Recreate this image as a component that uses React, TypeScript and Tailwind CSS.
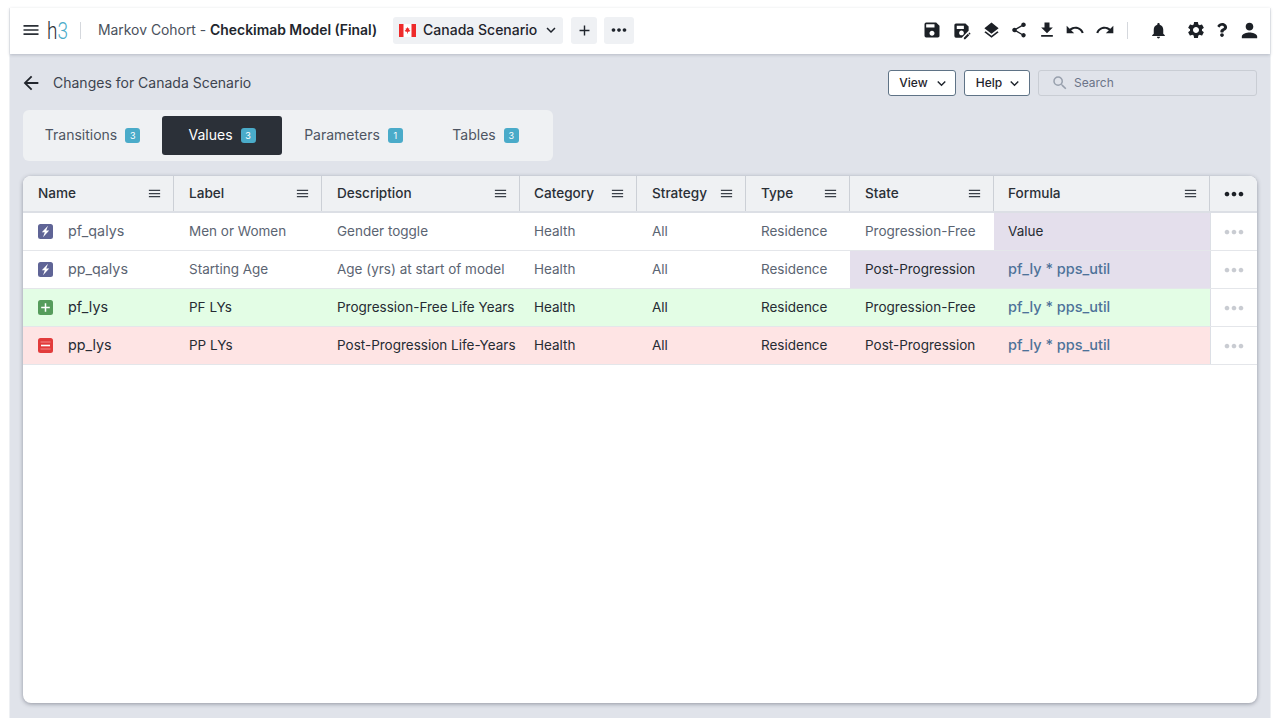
import { MdSave, MdSaveAs, MdLayers, MdShare, MdFileDownload, MdUndo, MdRedo, MdNotifications, MdSettings, MdPerson, MdMenu, MdKeyboardArrowDown, MdAdd, MdMoreHoriz, MdArrowBack, MdSearch } from "react-icons/md";
import { FaQuestion } from "react-icons/fa";

const cols = ["Name", "Label", "Description", "Category", "Strategy", "Type", "State", "Formula"];
const gridCols = "grid grid-cols-[151px_148px_198px_117px_109px_104px_144px_216px_47px]";

type Row = {
  kind: "edit" | "add" | "del";
  cells: string[];
  bg: string;
  text: string;
  stateBg?: string;
  formulaBg?: string;
  formulaLink: boolean;
};

const rows: Row[] = [
  { kind: "edit", cells: ["pf_qalys", "Men or Women", "Gender toggle", "Health", "All", "Residence", "Progression-Free", "Value"], bg: "bg-white", text: "text-[#5b6472]", formulaBg: "bg-[#e4dfec]", formulaLink: false },
  { kind: "edit", cells: ["pp_qalys", "Starting Age", "Age (yrs) at start of model", "Health", "All", "Residence", "Post-Progression", "pf_ly * pps_util"], bg: "bg-white", text: "text-[#5b6472]", stateBg: "bg-[#e4dfec]", formulaBg: "bg-[#e4dfec]", formulaLink: true },
  { kind: "add", cells: ["pf_lys", "PF LYs", "Progression-Free Life Years", "Health", "All", "Residence", "Progression-Free", "pf_ly * pps_util"], bg: "bg-[#e3fde5]", text: "text-[#262b33]", formulaLink: true },
  { kind: "del", cells: ["pp_lys", "PP LYs", "Post-Progression Life-Years", "Health", "All", "Residence", "Post-Progression", "pf_ly * pps_util"], bg: "bg-[#fee4e4]", text: "text-[#262b33]", formulaLink: true },
];

function RowIcon({ kind }: { kind: Row["kind"] }) {
  if (kind === "edit")
    return (
      <svg width="15" height="15" viewBox="0 0 15 15" className="shrink-0">
        <rect width="15" height="15" rx="2.5" fill="#5f6496" />
        <path d="M10 1.8 3.8 8.3h3L5 13.2l6.2-6.6h-3z" fill="#fff" />
      </svg>
    );
  if (kind === "add")
    return (
      <svg width="15" height="15" viewBox="0 0 15 15" className="shrink-0">
        <rect width="15" height="15" rx="2.5" fill="#569c5c" />
        <path d="M7.5 3.2v8.6M3.2 7.5h8.6" stroke="#fff" strokeWidth="1.5" />
      </svg>
    );
  return (
    <svg width="15" height="15" viewBox="0 0 15 15" className="shrink-0">
      <rect width="15" height="15" rx="2.5" fill="#e23b3b" />
      <path d="M2.5 4h10M2.5 11h10" stroke="#f58a8a" strokeWidth="1" />
      <path d="M3 7.5h9" stroke="#fff" strokeWidth="1.6" />
    </svg>
  );
}

function Flag() {
  return (
    <svg width="17" height="13" viewBox="0 0 17 13" className="shrink-0">
      <rect width="17" height="13" fill="#fff" />
      <rect width="4.5" height="13" fill="#ee2a2a" />
      <rect x="12.5" width="4.5" height="13" fill="#ee2a2a" />
      <path d="M8.5 3 9.3 4.6 10.3 4.2 10 6.4 11 5.8 11.2 6.8 10.2 7.8 8.9 7.7V9.5H8.1V7.7L6.8 7.8 5.8 6.8 6 5.8 7 6.4 6.7 4.2 7.7 4.6z" fill="#ee2a2a" />
    </svg>
  );
}

function Tab({ label, n, active, w }: { label: string; n: string; active?: boolean; w: string }) {
  return (
    <div className={`flex h-[39px] items-center justify-center gap-[8px] rounded-[3px] ${w} ${active ? "bg-[#2b3038] text-white" : "text-[#4d5562]"}`}>
      <span className="pb-[2px] text-[14px]">{label}</span>
      <span className="flex h-[15px] w-[15px] items-center justify-center rounded-[3px] bg-[#4aabc9] text-[9px] text-white">{n}</span>
    </div>
  );
}

export default function App() {
  return (
    <div className="flex h-[718px] w-[1280px] overflow-hidden bg-white px-[9px] pt-2 font-['Inter','Noto_Sans',sans-serif] text-[#1f242c]">
      <div className="flex min-w-0 flex-1 flex-col border-l border-r border-[#eef0f3] bg-[#e0e3ea]">
        <header className="relative z-10 flex h-[46px] shrink-0 items-center bg-white pb-[2px] pl-[11px] pr-[9px] shadow-[0_1px_3px_rgba(60,70,90,0.25)]">
          <MdMenu className="text-[20px] text-[#2a2f36]" />
          <div className="ml-[6px] flex w-[22px] scale-y-[1.3] items-baseline font-['Roboto',sans-serif] text-[19px] leading-none font-light">
            <span className="text-[#2a2f36]">h</span>
            <span className="text-[#4aabc9]">3</span>
          </div>
          <div className="ml-[11px] h-[17px] w-px bg-[#d5d8dd]" />
          <div className="ml-[17px] text-[13.9px] whitespace-nowrap">
            <span className="text-[#4a515c]">Markov Cohort - </span>
            <span className="font-semibold text-[#22262d]">Checkimab Model (Final)</span>
          </div>
          <div className="ml-[16px] flex h-[27px] w-[170px] items-center rounded-[3px] bg-[#eff1f4] pl-[6px]">
            <Flag />
            <span className="ml-[7px] pb-[2px] text-[14px] font-medium whitespace-nowrap">Canada Scenario</span>
            <MdKeyboardArrowDown className="ml-auto mr-[3px] text-[18px]" />
          </div>
          <div className="ml-[8px] flex h-[27px] w-[26px] items-center justify-center rounded-[3px] bg-[#eff1f4]">
            <MdAdd className="text-[17px]" />
          </div>
          <div className="ml-[7px] flex h-[27px] w-[30px] items-center justify-center rounded-[3px] bg-[#eff1f4]">
            <MdMoreHoriz className="text-[22px]" />
          </div>
          <div className="ml-auto flex items-center text-[#1c2026]">
            <MdSave className="text-[20px]" />
            <MdSaveAs className="ml-[10px] text-[19px]" />
            <MdLayers className="ml-[11px] text-[19px]" />
            <MdShare className="ml-[9px] text-[18px]" />
            <MdFileDownload className="ml-[9px] text-[20px]" />
            <MdUndo className="ml-[8px] text-[20px]" />
            <MdRedo className="ml-[10px] text-[20px]" />
            <div className="ml-[12px] h-[17px] w-px bg-[#d5d8dd]" />
            <MdNotifications className="ml-[21px] text-[19px]" />
            <MdSettings className="ml-[18px] text-[20px]" />
            <FaQuestion className="ml-[9px] text-[14px]" />
            <MdPerson className="ml-[9px] text-[23px]" />
          </div>
        </header>

        <main className="flex min-h-0 flex-1 flex-col pl-[13px] pr-[13px]">
          <div className="mt-[16px] flex h-[26px] items-center">
            <MdArrowBack className="-ml-[3px] text-[22px] text-[#22262d]" />
            <span className="ml-[11px] pb-[2px] text-[14px] text-[#3d444f]">Changes for Canada Scenario</span>
            <button className="ml-auto flex h-[26px] w-[68px] items-center justify-center gap-[5px] rounded-[3px] border border-[#5f7386] bg-white pl-[5px] text-[12px] font-medium">
              View <MdKeyboardArrowDown className="text-[17px]" />
            </button>
            <button className="ml-[8px] flex h-[26px] w-[66px] items-center justify-center gap-[4px] rounded-[3px] border border-[#5f7386] bg-white pl-[5px] text-[12px] font-medium">
              Help <MdKeyboardArrowDown className="text-[17px]" />
            </button>
            <div className="ml-[8px] flex h-[26px] w-[219px] items-center rounded-[3px] border border-[#c9cdd4] bg-[#e0e3ea] pl-[12px] text-[12px] text-[#6b7488]">
              <MdSearch className="text-[18px] text-[#98a0ad]" />
              <span className="ml-[5px]">Search</span>
            </div>
          </div>

          <div className="mt-[14px] flex h-[51px] w-[530px] items-center rounded-[6px] bg-[#eff1f3] pl-[5px]">
            <Tab label="Transitions" n="3" w="w-[134px] pr-[5px]" />
            <Tab label="Values" n="3" active w="w-[120px]" />
            <Tab label="Parameters" n="1" w="w-[143px]" />
            <Tab label="Tables" n="3" w="w-[121px]" />
          </div>

          <section className="mt-[15px] mb-[15px] min-h-0 flex-1 overflow-hidden rounded-[8px] bg-white shadow-[0_1px_4px_rgba(50,55,70,0.45)]">
            <div className={`${gridCols} h-[37px] border-b-2 border-[#dcdfe5] bg-[#eff1f3]`}>
              {cols.map((c, i) => (
                <div key={c} className={`flex items-center border-r border-[#ccd0d6] pr-[11px] text-[13.6px] font-medium text-[#2a2f36] ${i === 3 || i === 7 ? "pl-[14px]" : "pl-[15px]"}`}>
                  <span>{c}</span>
                  <MdMenu className="ml-auto text-[15px] text-[#3a4048]" />
                </div>
              ))}
              <div className="flex items-center justify-center">
                <MdMoreHoriz className="text-[28px] text-[#1c2026]" />
              </div>
            </div>
            {rows.map((r) => (
              <div key={r.cells[0]} className={`${gridCols} h-[38px] border-b border-[#e4e6ea] ${r.bg} ${r.text} text-[13.5px]`}>
                {r.cells.map((c, i) => (
                  <div
                    key={i}
                    className={`flex items-center whitespace-nowrap ${i === 3 || i === 7 ? "pl-[14px]" : "pl-[15px]"} ${i === 6 && r.stateBg ? "bg-[#e4dfec] text-[#262b33]" : ""} ${i === 7 && r.formulaBg ? "bg-[#e4dfec]" : ""} ${i === 7 && !r.formulaLink ? "text-[#262b33]" : ""} ${i === 7 && r.formulaLink ? "pb-[2px] text-[14.5px] font-medium text-[#4d7299]" : ""}`}
                  >
                    {i === 0 && <RowIcon kind={r.kind} />}
                    <span className={i === 0 ? "ml-[15px] pb-[2px] text-[14.3px]" : ""}>{c}</span>
                  </div>
                ))}
                <div className="flex items-center justify-center border-l border-[#dcdfe5] bg-white">
                  <MdMoreHoriz className="text-[28px] text-[#c9ccd2]" />
                </div>
              </div>
            ))}
          </section>
        </main>
      </div>
    </div>
  );
}
